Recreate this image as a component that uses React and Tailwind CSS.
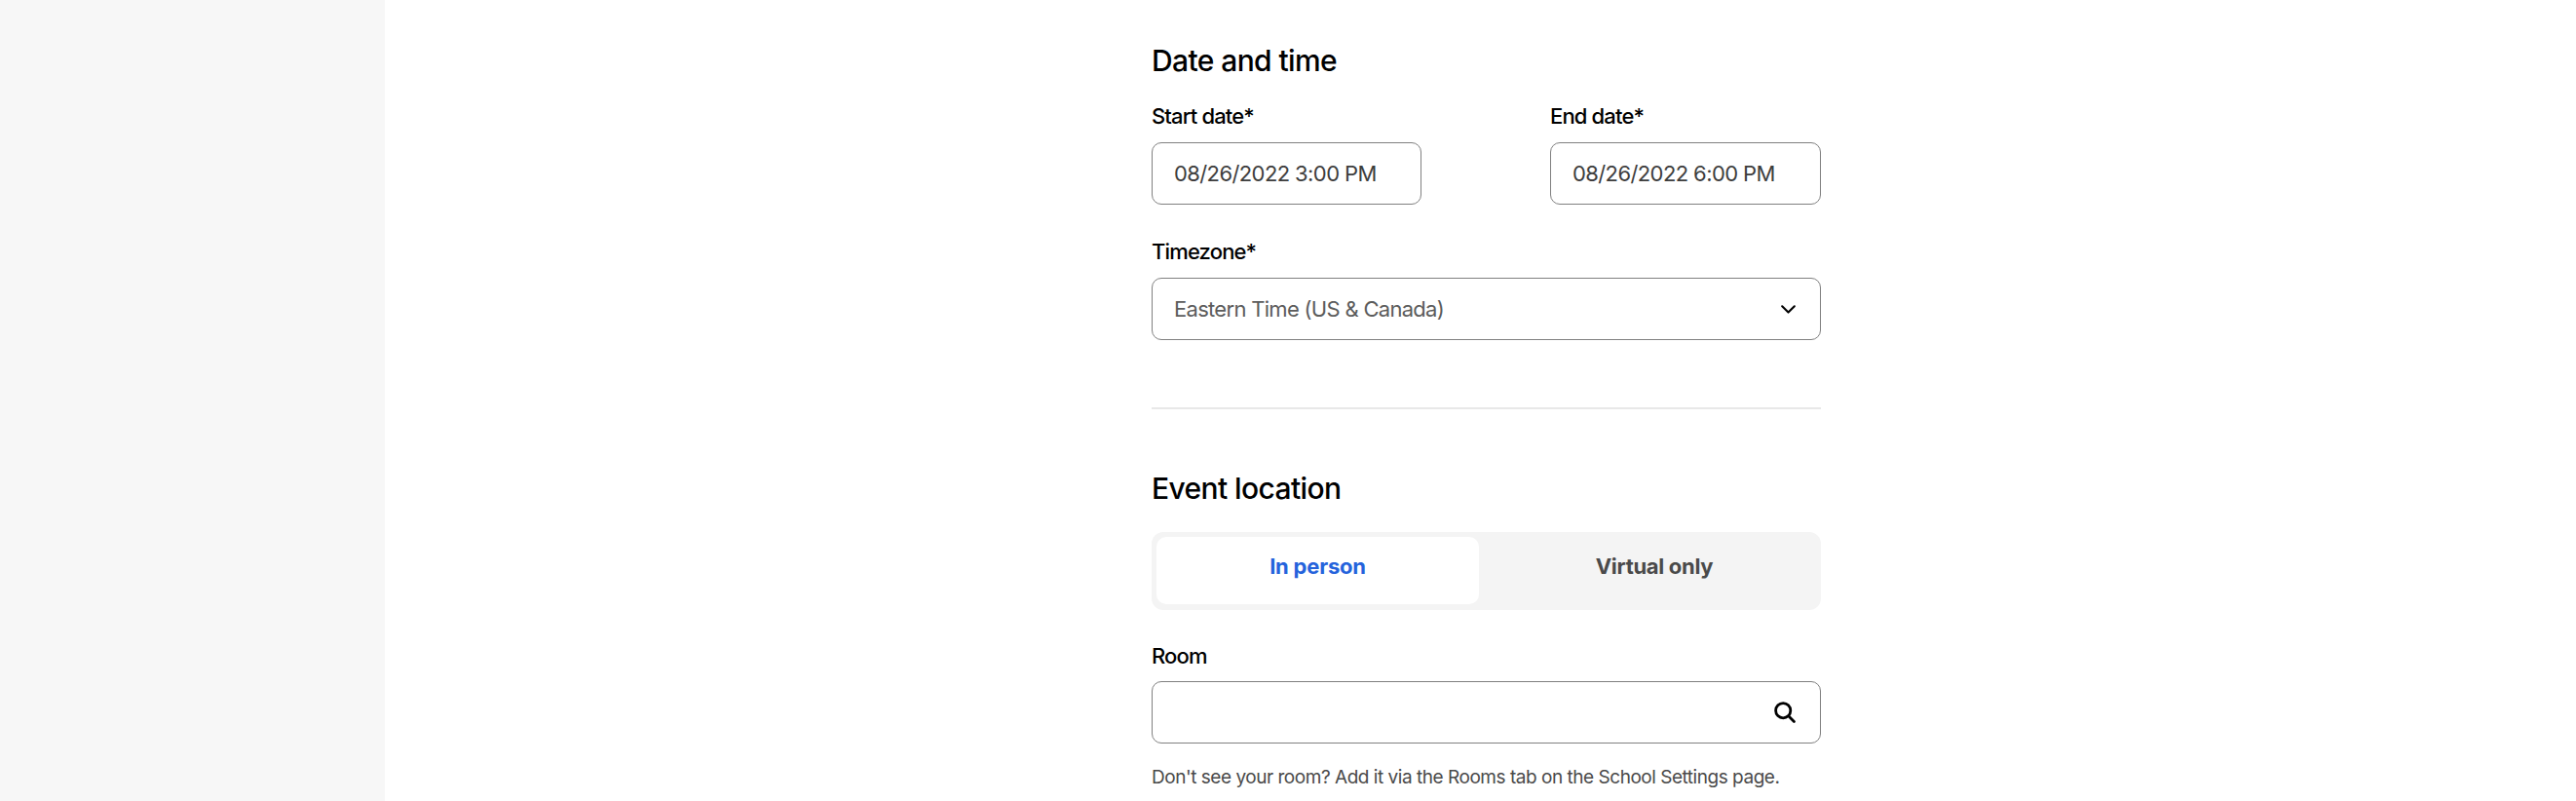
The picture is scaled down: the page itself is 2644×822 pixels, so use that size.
import React from "react";

function Label({ children, className = "" }) {
  return <div className={`text-[22px] leading-[30px] font-medium text-black tracking-[-0.85px] ${className}`}>{children}</div>;
}

function Box({ children, className = "" }) {
  return (
    <div className={`h-[64px] rounded-[10px] border border-[#808080] bg-white flex items-center ${className}`}>
      {children}
    </div>
  );
}

export default function App() {
  return (
    <div className="flex h-[822px] w-[2644px] overflow-hidden bg-white font-['Inter',sans-serif]">
      <aside className="w-[395px] shrink-0 bg-[#f7f7f7]" />
      <main className="flex-1 pl-[787px]">
        <div className="w-[687px]">
          <h2 className="pt-[43px] text-[30px] leading-[38px] font-medium text-black tracking-[-0.6px]">Date and time</h2>
          <div className="mt-[23px] flex justify-between">
            <div className="w-[277px]">
              <Label>Start date*</Label>
              <Box className="mt-[12px] px-[22px] text-[22px] text-[#3d3d3d] tracking-[-0.6px]">08/26/2022 3:00 PM</Box>
            </div>
            <div className="w-[278px]">
              <Label>End date*</Label>
              <Box className="mt-[12px] px-[22px] text-[22px] text-[#3d3d3d] tracking-[-0.6px]">08/26/2022 6:00 PM</Box>
            </div>
          </div>
          <Label className="mt-[33px]">Timezone*</Label>
          <Box className="mt-[12px] pl-[22px] pr-[25px] justify-between text-[22px] text-[#5c5c5c] tracking-[-0.7px]">
            <span>Eastern Time (US &amp; Canada)</span>
            <svg width="15" height="9" viewBox="0 0 15 9" fill="none" stroke="black" strokeWidth="2.1" strokeLinecap="round" strokeLinejoin="round">
              <path d="M1.2 1.3 L7.5 7.6 L13.8 1.3" />
            </svg>
          </Box>
          <div className="mt-[69px] h-[2px] bg-[#e8e8e8]" />
          <h2 className="mt-[62px] text-[30px] leading-[38px] font-medium text-black tracking-[-0.6px]">Event location</h2>
          <div className="mt-[26px] flex h-[80px] rounded-[12px] bg-[#f4f4f4] pt-[5px] pl-[5px] pr-[5px] pb-[6px]">
            <div className="flex w-[331px] justify-center rounded-[10px] bg-white pt-[15px] text-[22px] leading-[30px] font-bold text-[#2563dc] tracking-[-0.2px]">In person</div>
            <div className="flex flex-1 justify-center pl-[14px] pt-[15px] text-[22px] leading-[30px] font-bold text-[#4a4a4a] tracking-[-0.3px]">Virtual only</div>
          </div>
          <Label className="mt-[32px]">Room</Label>
          <Box className="mt-[11px] justify-end pr-[25px]">
            <svg width="22" height="22" viewBox="0 0 22 22" fill="none" stroke="black" strokeWidth="2.8" strokeLinecap="round">
              <circle cx="9.2" cy="9.2" r="7.6" />
              <path d="M15 15 L20.4 20.4" />
            </svg>
          </Box>
          <p className="mt-[21px] text-[19px] leading-[28px] text-[#4a4a4a] tracking-[-0.47px] whitespace-nowrap">Don't see your room? Add it via the Rooms tab on the School Settings page.</p>
        </div>
      </main>
    </div>
  );
}
